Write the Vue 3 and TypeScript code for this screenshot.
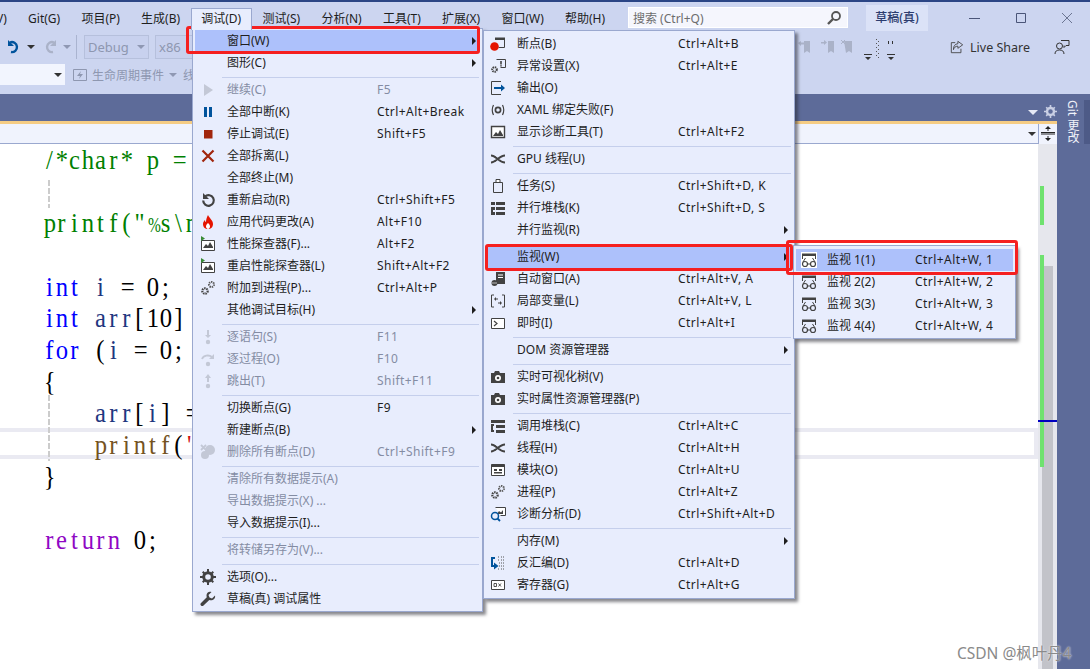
<script setup lang="ts">
interface Item { label?: string; key?: string; icon?: string; arrow?: boolean; off?: boolean; active?: boolean; sep?: boolean }
const s: Item = { sep: true }
const debugMenu: Item[] = [
  { label: '窗口(W)', arrow: true, active: true },
  { label: '图形(C)', arrow: true }, s,
  { label: '继续(C)', key: 'F5', icon: 'play', off: true },
  { label: '全部中断(K)', key: 'Ctrl+Alt+Break', icon: 'pause' },
  { label: '停止调试(E)', key: 'Shift+F5', icon: 'stop' },
  { label: '全部拆离(L)', icon: 'cross' },
  { label: '全部终止(M)' },
  { label: '重新启动(R)', key: 'Ctrl+Shift+F5', icon: 'restart' },
  { label: '应用代码更改(A)', key: 'Alt+F10', icon: 'flame' },
  { label: '性能探查器(F)...', key: 'Alt+F2', icon: 'perf' },
  { label: '重启性能探查器(L)', key: 'Shift+Alt+F2', icon: 'perf' },
  { label: '附加到进程(P)...', key: 'Ctrl+Alt+P', icon: 'gears' },
  { label: '其他调试目标(H)', arrow: true }, s,
  { label: '逐语句(S)', key: 'F11', icon: 'stepin', off: true },
  { label: '逐过程(O)', key: 'F10', icon: 'stepover', off: true },
  { label: '跳出(T)', key: 'Shift+F11', icon: 'stepout', off: true }, s,
  { label: '切换断点(G)', key: 'F9' },
  { label: '新建断点(B)', arrow: true },
  { label: '删除所有断点(D)', key: 'Ctrl+Shift+F9', icon: 'bpdel', off: true }, s,
  { label: '清除所有数据提示(A)', off: true },
  { label: '导出数据提示(X) ...', off: true },
  { label: '导入数据提示(I)...' }, s,
  { label: '将转储另存为(V)...', off: true }, s,
  { label: '选项(O)...', icon: 'gear' },
  { label: '草稿(真) 调试属性', icon: 'wrench' },
]
const windowMenu: Item[] = [
  { label: '断点(B)', key: 'Ctrl+Alt+B', icon: 'bp' },
  { label: '异常设置(X)', key: 'Ctrl+Alt+E', icon: 'exc' },
  { label: '输出(O)', icon: 'output' },
  { label: 'XAML 绑定失败(F)', icon: 'xaml' },
  { label: '显示诊断工具(T)', key: 'Ctrl+Alt+F2', icon: 'diag' }, s,
  { label: 'GPU 线程(U)', icon: 'threads' }, s,
  { label: '任务(S)', key: 'Ctrl+Shift+D, K', icon: 'task' },
  { label: '并行堆栈(K)', key: 'Ctrl+Shift+D, S', icon: 'stacks' },
  { label: '并行监视(R)', arrow: true }, s,
  { label: '监视(W)', arrow: true, active: true },
  { label: '自动窗口(A)', key: 'Ctrl+Alt+V, A', icon: 'auto' },
  { label: '局部变量(L)', key: 'Ctrl+Alt+V, L', icon: 'locals' },
  { label: '即时(I)', key: 'Ctrl+Alt+I', icon: 'imm' }, s,
  { label: 'DOM 资源管理器', arrow: true }, s,
  { label: '实时可视化树(V)', icon: 'camera' },
  { label: '实时属性资源管理器(P)', icon: 'camera' }, s,
  { label: '调用堆栈(C)', key: 'Ctrl+Alt+C', icon: 'call' },
  { label: '线程(H)', key: 'Ctrl+Alt+H', icon: 'threads' },
  { label: '模块(O)', key: 'Ctrl+Alt+U', icon: 'module' },
  { label: '进程(P)', key: 'Ctrl+Alt+Z', icon: 'gears' },
  { label: '诊断分析(D)', key: 'Ctrl+Shift+Alt+D', icon: 'analyze' }, s,
  { label: '内存(M)', arrow: true },
  { label: '反汇编(D)', key: 'Ctrl+Alt+D', icon: 'disasm' },
  { label: '寄存器(G)', key: 'Ctrl+Alt+G', icon: 'reg' },
]
const watchMenu: Item[] = [
  { label: '监视 1(1)', key: 'Ctrl+Alt+W, 1', icon: 'watch', active: true },
  { label: '监视 2(2)', key: 'Ctrl+Alt+W, 2', icon: 'watch' },
  { label: '监视 3(3)', key: 'Ctrl+Alt+W, 3', icon: 'watch' },
  { label: '监视 4(4)', key: 'Ctrl+Alt+W, 4', icon: 'watch' },
]
const menus = [
  { id: 'm1', items: debugMenu },
  { id: 'm2', items: windowMenu },
  { id: 'm3', items: watchMenu },
]
const menubar = ['Git(G)', '项目(P)', '生成(B)', '调试(D)', '测试(S)', '分析(N)', '工具(T)', '扩展(X)', '窗口(W)', '帮助(H)']

type Tok = [string, string]
const lines: Tok[][] = [
  [['c', '/*char* p =']],
  [],
  [['c', 'printf("%s\\n']],
  [],
  [['k', 'int'], ['p', ' '], ['v', 'i'], ['p', ' = 0;']],
  [['k', 'int'], ['p', ' '], ['v', 'arr'], ['p', '[10]']],
  [['k', 'for'], ['p', ' ('], ['v', 'i'], ['p', ' = 0;']],
  [['p', '{']],
  [['p', '    '], ['v', 'arr'], ['p', '['], ['v', 'i'], ['p', '] =']],
  [['p', '    '], ['f', 'printf'], ['p', '('], ['s', '"']],
  [['p', '}']],
  [],
  [['r', 'return'], ['p', ' 0;']],
]
</script>

<template>
  <div class="ide">
    <svg class="defs" width="0" height="0" aria-hidden="true">
      <defs>
        <symbol id="play" viewBox="0 0 16 16"><path d="M4 2l9 6-9 6z" fill="#c3c8d6"/></symbol>
        <symbol id="pause" viewBox="0 0 16 16"><path d="M4 3h3v10H4zM9 3h3v10H9z" fill="#00539c"/></symbol>
        <symbol id="stop" viewBox="0 0 16 16"><path d="M4 4h8.500v8.500H4z" fill="#a1260d"/></symbol>
        <symbol id="cross" viewBox="0 0 16 16"><path d="M2.500 2.500l11 11M13.500 2.500l-11 11" stroke="#a1260d" stroke-width="2.200" fill="none"/></symbol>
        <symbol id="restart" viewBox="0 0 16 16"><path d="M5 4.500a5.300 5.300 0 1 1-1.800 4" stroke="#424242" stroke-width="2.200" fill="none"/><path d="M3 1v6h6z" fill="#424242"/></symbol>
        <symbol id="flame" viewBox="0 0 16 16"><path d="M8 1c1 3 5 5 5 9 0 3-2 5-5 5s-5-2-5-5c0-2 1-3 2-4 0 2 1 2 1 2 0-3 1-5 2-7z" fill="#e51400"/><path d="M8 9c1 1 2 2 2 3.500S9 15 8 15s-2-1-2-2.500S7 10 8 9z" fill="#fff"/></symbol>
        <symbol id="perf" viewBox="0 0 16 16"><path d="M1.500 4.500h13v10h-13z" fill="#fff" stroke="#424242"/><path d="M3 12l3-4 2 2 2-4 3 5v1H3z" fill="#424242"/><path d="M1 0l4 2.500L1 5z" fill="#388a34"/></symbol>
        <symbol id="gears" viewBox="0 0 16 16"><circle cx="5" cy="11" r="2.700" fill="none" stroke="#424242" stroke-width="2.200" stroke-dasharray="1.500 .8"/><circle cx="11.500" cy="4.500" r="2.500" fill="none" stroke="#5a5a5a" stroke-width="2" stroke-dasharray="1.400 .8"/></symbol>
        <symbol id="stepin" viewBox="0 0 16 16"><path d="M7 1h2v5h2l-3 3-3-3h2z" fill="#c3c8d6"/><circle cx="8" cy="13" r="2.200" fill="#c3c8d6"/></symbol>
        <symbol id="stepover" viewBox="0 0 16 16"><path d="M2 8a6 5 0 0 1 10-2" fill="none" stroke="#c3c8d6" stroke-width="1.800"/><path d="M14 3v5H9z" fill="#c3c8d6"/><circle cx="8" cy="13" r="2.200" fill="#c3c8d6"/></symbol>
        <symbol id="stepout" viewBox="0 0 16 16"><path d="M7 9h2V5h2L8 1 5 5h2z" fill="#c3c8d6"/><circle cx="8" cy="13" r="2.200" fill="#c3c8d6"/></symbol>
        <symbol id="bpdel" viewBox="0 0 16 16"><circle cx="10" cy="6" r="5" fill="#c3c8d6"/><circle cx="5" cy="11" r="4" fill="#c3c8d6"/><path d="M1 1l5 5M6 1L1 6" stroke="#c3c8d6" stroke-width="1.800"/></symbol>
        <symbol id="gear" viewBox="0 0 16 16"><circle cx="8" cy="8" r="4.300" fill="none" stroke="#424242" stroke-width="3"/><path d="M7 0h2v3H7zM7 13h2v3H7zM0 7h3v2H0zM13 7h3v2h-3zM2 3.400L3.400 2l2 2L4 5.400zM10.600 12l1.400-1.400 2 2-1.400 1.400zM2 12.600l2-2L5.400 12l-2 2zM10.600 4l2-2L14 3.400l-2 2z" fill="#424242"/></symbol>
        <symbol id="wrench" viewBox="0 0 16 16"><path d="M15 4.500l-3 3-2.500-1-1-2.500 3-3C9 0 6.500 1.500 6.500 4.500c0 .8.200 1.300.3 1.700L1 12c-1 1-.5 2 0 2.500s1.600 1 2.500 0L9.300 9c2.700 1.200 6.600-.8 5.700-4.500z" fill="#424242"/></symbol>
        <symbol id="bp" viewBox="0 0 16 16"><path d="M5.500 2.500h9v9h-6" fill="none" stroke="#424242"/><path d="M5 1.500h10V4H5z" fill="#424242"/><circle cx="4.500" cy="10.500" r="4.300" fill="#e51400"/></symbol>
        <symbol id="exc" viewBox="0 0 16 16"><path d="M6.500 1.500h9v8h-5" fill="none" stroke="#424242"/><path d="M10.200 3h1.600v3.500h-1.600zM10.200 7.200h1.600v1.300h-1.600z" fill="#424242"/><circle cx="4.500" cy="11.500" r="2.300" fill="none" stroke="#424242" stroke-width="2" stroke-dasharray="1.300 .7"/></symbol>
        <symbol id="output" viewBox="0 0 16 16"><path d="M11 1.500H1.500v13H11" fill="none" stroke="#424242"/><path d="M4 7h7V4.500L15 8l-4 3.500V9H4z" fill="#00539c"/></symbol>
        <symbol id="xaml" viewBox="0 0 16 16"><path d="M3.500 3Q1 8 3.500 13M12.500 3Q15 8 12.500 13" fill="none" stroke="#424242" stroke-width="1.200"/><circle cx="8" cy="8" r="2.600" fill="none" stroke="#424242" stroke-width="1.700"/></symbol>
        <symbol id="diag" viewBox="0 0 16 16"><path d="M1.500 2.500h13v11h-13z" fill="#fff" stroke="#424242" stroke-width="1.400"/><path d="M3 12l3-4 2 2 2-4 3 5v1H3z" fill="#424242"/></symbol>
        <symbol id="threads" viewBox="0 0 16 16"><path d="M1 4.500c5 0 8 7 14 7M1 11.500c5 0 8-7 14-7" fill="none" stroke="#424242" stroke-width="2"/><path d="M5 5.500l3 2.500 3-2.500M5 10.500L8 8l3 2.500" fill="none" stroke="#424242"/></symbol>
        <symbol id="task" viewBox="0 0 16 16"><path d="M3.500 4.500h9v10h-9z" fill="none" stroke="#424242"/><path d="M6 1.500h4v3H6z" fill="#fff" stroke="#424242"/></symbol>
        <symbol id="stacks" viewBox="0 0 16 16"><path d="M1 2h4v3H1zM6 2h9v3H6zM6 7h9v3H6zM6 12h9v3H6zM1 7h4v3H3v2h2v3H1z" fill="#424242"/></symbol>
        <symbol id="auto" viewBox="0 0 16 16"><path d="M6 1h9v12H6z" fill="#424242"/><path d="M8 3.500h5v1H8zM8 6h5v1H8z" fill="#fff"/><circle cx="4.500" cy="12" r="3" fill="#424242"/><path d="M2 12h5" stroke="#bbb"/></symbol>
        <symbol id="locals" viewBox="0 0 16 16"><path d="M4 2H1.500v12H4M12 2h2.500v12H12" fill="none" stroke="#424242"/><path d="M4 6l2-2v1.500h2v1H6V8zM12 10l-2 2v-1.500H8v-1h2V8z" fill="#424242"/></symbol>
        <symbol id="imm" viewBox="0 0 16 16"><path d="M1.500 3.500h13v10h-13z" fill="#fff" stroke="#424242"/><path d="M4 6l3 2.500L4 11" fill="none" stroke="#424242" stroke-width="1.200"/></symbol>
        <symbol id="camera" viewBox="0 0 16 16"><path d="M1 4h3l1-2h4l1 2h5v10H1z" fill="#424242"/><circle cx="8" cy="9" r="3" fill="#fff"/><circle cx="8" cy="9" r="1.300" fill="#424242"/></symbol>
        <symbol id="call" viewBox="0 0 16 16"><path d="M1 2h14v3H1zM6 7h9v3H6zM6 12h9v3H6zM1 6h3v2H3v4h1v2H1z" fill="#424242"/></symbol>
        <symbol id="module" viewBox="0 0 16 16"><path d="M1.500 2.500h13v11h-13z" fill="#fff" stroke="#424242"/><path d="M1.500 2.500h13v2.500h-13zM4 7h3v2H4zM9 7h3v2H9zM4 10h8v1.500H4z" fill="#424242"/></symbol>
        <symbol id="analyze" viewBox="0 0 16 16"><path d="M5.500 1.500h10v8h-5" fill="#fff" stroke="#424242"/><path d="M7 8l2-3 2 1.500L13 4v4z" fill="#424242"/><circle cx="5" cy="10" r="3.500" fill="none" stroke="#00539c" stroke-width="1.500"/><path d="M7.500 12.500L10 15" stroke="#00539c" stroke-width="1.800"/></symbol>
        <symbol id="disasm" viewBox="0 0 16 16"><path d="M8 2h2M11 2h4M8 5h1M11 5h3M9 8h6M9 11h6M8 14h2M11 14h4" stroke="#555" stroke-dasharray="1 1" fill="none"/><path d="M1 2h4v2H3v6h1V7.500L8.500 11 4 14.500V12H1z" fill="#00539c"/></symbol>
        <symbol id="reg" viewBox="0 0 16 16"><path d="M1.500 3.500h13v9h-13z" fill="#fff" stroke="#424242"/><path d="M4 6.500h2.500v3H4zM8.500 6.500l2.500 3M11 6.500l-2.500 3" fill="none" stroke="#424242" stroke-width=".9"/></symbol>
        <symbol id="watch" viewBox="0 0 16 16"><path d="M1 1.500h14V4H1z" fill="#424242"/><path d="M1.500 4v3M14.500 4v3" stroke="#424242"/><circle cx="4" cy="12" r="2.500" fill="none" stroke="#424242" stroke-width="1.200"/><circle cx="12" cy="12" r="2.500" fill="none" stroke="#424242" stroke-width="1.200"/><path d="M6.500 12h3M2 10l2.500-4M14 10l-2.500-4" fill="none" stroke="#424242"/></symbol>
      </defs>
    </svg>

    <header class="chrome">
      <div class="titlebar">
        <nav class="menubar">
          <span class="mi clip">V)</span>
          <span v-for="m in menubar" :key="m" class="mi" :class="{ open: m === '调试(D)' }">{{ m }}</span>
        </nav>
        <div class="search">
          <span>搜索 (Ctrl+Q)</span>
          <svg width="16" height="16" viewBox="0 0 16 16"><circle cx="10" cy="6" r="4" fill="none" stroke="#555" stroke-width="1.800"/><path d="M7 9l-5 5" stroke="#555" stroke-width="2.400"/></svg>
        </div>
        <div class="project">草稿(真)</div>
        <div class="winctl">
          <svg width="12" height="12" viewBox="0 0 12 12"><path d="M0 6.500h11" stroke="#4a5578"/></svg>
          <svg width="12" height="12" viewBox="0 0 12 12"><path d="M1.500 1.500h9v9h-9z" fill="none" stroke="#4a5578"/></svg>
          <svg width="12" height="12" viewBox="0 0 12 12"><path d="M1 1l10 10M11 1L1 11" stroke="#6b7592"/></svg>
        </div>
      </div>

      <div class="toolrow one">
        <svg class="undo" width="16" height="16" viewBox="0 0 16 16"><path d="M4 3.500a5 5 0 1 1 1 9.500" fill="none" stroke="#00539c" stroke-width="2.400"/><path d="M2 1v6h6z" fill="#00539c"/></svg>
        <i class="tri"></i>
        <svg class="redo" width="16" height="16" viewBox="0 0 16 16"><path d="M12 3.500a5 5 0 1 0-1 9.500" fill="none" stroke="#aab2c8" stroke-width="2.400"/><path d="M14 1v6H8z" fill="#aab2c8"/></svg>
        <i class="tri dim"></i>
        <i class="tsep"></i>
        <div class="combo debug">Debug<i class="tri dim"></i></div>
        <div class="combo x86">x86</div>
        <div class="spring"></div>
        <svg class="marks" width="62" height="18" viewBox="0 0 62 18" fill="#aab2c8"><path d="M7 3h6v12l-3-2-3 2zM1 5l3-2v1.500h3v2H4V8zM24 4h3V2l3 2.500L27 7V5.500h-3zM31 3h6v12l-3-2-3 2zM47 3h8v12l-3-2-3 2zM44 2l4 4M48 2l-4 4"/><path d="M44 2l4 4M48 2l-4 4" stroke="#aab2c8"/></svg>
        <svg class="flows" width="36" height="24" viewBox="0 0 36 24"><path d="M2 16h8v1H2zM3 19h6l-3 3z" fill="#333"/><path d="M14 1h1v1h-1zM16 3h1v1h-1zM14 5h1v1h-1zM16 7h1v1h-1zM14 9h1v1h-1zM16 11h1v1h-1zM14 13h1v1h-1zM16 15h1v1h-1zM14 17h1v1h-1zM16 19h1v1h-1z" fill="#555"/><path d="M26 3h1v3h-1zM30 3h1v3h-1zM25 16h8v1h-8zM26 19h6l-3 3z" fill="#333"/></svg>
        <div class="live">
          <svg width="14" height="14" viewBox="0 0 16 16"><path d="M6 3H1.500v11.500h11V10" fill="none" stroke="#424242"/><path d="M9 1.500l5.500 4-5.500 4V7C6 7 4.500 9 4 11c-.500-4 2-6.500 5-6.800z" fill="none" stroke="#424242"/></svg>
          <span>Live Share</span>
        </div>
        <svg class="feedback" width="16" height="16" viewBox="0 0 16 16"><circle cx="5.500" cy="7" r="3" fill="none" stroke="#333"/><path d="M1 15c0-3 2-4 4.500-4s4.500 1 4.500 4" fill="none" stroke="#333"/><path d="M7 1.500h8v5h-3l-2 2v-2" fill="none" stroke="#333"/></svg>
      </div>

      <div class="toolrow two">
        <div class="scopebox"><i class="tri"></i></div>
        <svg class="bolt" width="14" height="14" viewBox="0 0 14 14"><path d="M.5 1.500h13v11H.5z" fill="none" stroke="#8e97b0"/><path d="M8 3L4 8h3l-1 3 4-5H7z" fill="#8e97b0"/></svg>
        <span class="life">生命周期事件</span>
        <i class="tri dim"></i>
        <span class="life thread">线</span>
      </div>
    </header>

    <div class="workspace">
      <div class="docwell">
        <div class="tabband">
          <i class="tri pale"></i>
          <svg class="tabgear" width="13" height="13" viewBox="0 0 16 16"><circle cx="8" cy="8" r="4.300" fill="none" stroke="#c9cfe4" stroke-width="3"/><path d="M7 0h2v3H7zM7 13h2v3H7zM0 7h3v2H0zM13 7h3v2h-3zM2 3.400L3.400 2l2 2L4 5.400zM10.600 12l1.400-1.400 2 2-1.400 1.400zM2 12.600l2-2L5.400 12l-2 2zM10.600 4l2-2L14 3.400l-2 2z" fill="#c9cfe4"/></svg>
        </div>
        <div class="navbar">
          <i class="tri"></i>
          <div class="splitter">
            <svg width="16" height="18" viewBox="0 0 16 18"><path d="M1 9h14M1 7.500h14" stroke="#222" fill="none"/><path d="M8 1l-3 3h6zM8 16l-3-3h6z" fill="#222"/><path d="M7.500 3h1v3h-1zM7.500 11h1v3h-1z" fill="#222"/></svg>
          </div>
        </div>
        <div class="editorrow">
          <div class="editor">
            <div v-for="(line, n) in lines" :key="n" class="codeline" :class="{ current: n === 9 }">
              <span v-for="(tok, t) in line" :key="t" :class="tok[0]"><span v-for="(ch, c) in tok[1].split('')" :key="c" class="cell" :class="{ wide: ch === '%' }">{{ ch }}</span></span>
            </div>
            <i class="guide g1"></i>
            <i class="guide g2"></i>
          </div>
          <div class="scroll">
            <i class="thumb"></i>
            <i class="chg c1"></i>
            <i class="chg c2"></i>
            <i class="caret"></i>
          </div>
        </div>
      </div>
      <aside class="sidepanel">
        <div class="gittab"><span class="gitlabel">Git 更改</span><i class="gitstrip"></i></div>
      </aside>
    </div>

    <div v-for="menu in menus" :key="menu.id" class="menu" :class="menu.id">
      <template v-for="(it, i) in menu.items" :key="i">
        <div v-if="it.sep" class="sep"></div>
        <div v-else class="row" :class="{ off: it.off, active: it.active }">
          <span class="ico"><svg v-if="it.icon" width="16" height="16"><use :href="'#' + it.icon"/></svg></span>
          <span class="label">{{ it.label }}</span>
          <span class="key">{{ it.key }}</span>
          <i v-if="it.arrow" class="more"></i>
        </div>
      </template>
    </div>

    <i class="mark r1"></i>
    <i class="mark r2"></i>
    <i class="mark r3"></i>
    <div class="watermark">CSDN @枫叶丹4</div>
  </div>
</template>

<style scoped>
.ide {
  position: relative;
  width: 1090px;
  height: 669px;
  overflow: hidden;
  display: flex;
  flex-direction: column;
  background: #fff;
  font-family: "Noto Sans", "Noto Sans CJK SC", sans-serif;
  font-size: 12px;
  color: #1e1e1e;
}
.defs { position: absolute; }
.chrome {
  height: 94px;
  flex: none;
  background: #ccd5f0;
  border-top: 2px solid #2b4585;
  box-sizing: border-box;
}
.titlebar { height: 30px; display: flex; align-items: flex-start; }
.menubar { display: flex; height: 28px; margin-left: -14.500px; padding-top: 6px; box-sizing: border-box; }
.mi {
  height: 22px;
  line-height: 19px;
  padding: 0 9.600px;
  border: 1px solid transparent;
  border-bottom: 0;
  box-sizing: border-box;
  white-space: nowrap;
}
.mi.open { background: #e8edfd; border-color: #9aa8cf; position: relative; z-index: 6; }
.search {
  position: absolute;
  left: 628px;
  top: 7px;
  width: 220px;
  height: 21px;
  box-sizing: border-box;
  background: #f5f6fd;
  border: 1px solid #fff;
  display: flex;
  align-items: center;
  justify-content: space-between;
  padding: 0 5px 0 4px;
  color: #6d6d6d;
}
.project {
  position: absolute;
  left: 866px;
  top: 5px;
  width: 62px;
  height: 26px;
  background: #dbe2f7;
  color: #2c3c6e;
  text-align: center;
  line-height: 25px;
  font-weight: 500;
}
.winctl { position: absolute; left: 969px; top: 12px; display: flex; gap: 34px; }
.toolrow { display: flex; align-items: center; }
.one { height: 30px; position: relative; }
.two { height: 32px; }
.tri {
  display: inline-block;
  width: 0;
  height: 0;
  border-left: 4px solid transparent;
  border-right: 4px solid transparent;
  border-top: 4px solid #333;
}
.tri.dim { border-top-color: #8f98b3; }
.tri.pale { border-top-color: #e6e9f5; border-left-width: 5px; border-right-width: 5px; border-top-width: 5px; }
.undo { margin-left: 6px; }
.one > .tri { margin-left: 5px; }
.redo { margin-left: 7px; }
.tsep { width: 1px; height: 24px; background: #aab4d0; margin-left: 5px; }
.combo {
  height: 24px;
  box-sizing: border-box;
  border: 1px solid #b6c0dc;
  background: #c8d1ee;
  color: #8e97b0;
  font-size: 13px;
  line-height: 22px;
  padding-left: 3px;
  display: flex;
  align-items: center;
  justify-content: space-between;
  padding-right: 3px;
}
.debug { width: 65px; margin-left: 7px; }
.x86 { width: 40px; margin-left: 6px; }
.spring { flex: 1; }
.marks { margin-right: 3px; flex: none; }
.flows { margin-right: 52px; margin-top: 6px; flex: none; }
.live { display: flex; flex: none; align-items: center; gap: 6px; font-size: 12.500px; color: #333; margin-right: 24px; white-space: nowrap; }
.live svg { flex: none; }
.feedback { margin-right: 20px; flex: none; }
.scopebox {
  width: 65px;
  height: 21px;
  margin-top: -7px;
  background: #f2f5fe;
  display: flex;
  align-items: center;
  justify-content: flex-end;
  padding-right: 3px;
  box-sizing: border-box;
}
.bolt { margin: -7px 5px 0 8px; }
.life { color: #8e97b0; margin-top: -7px; }
.two > .tri { margin: -7px 0 0 5px; }
.thread { margin-left: 6px; }
.workspace { flex: 1; display: flex; min-height: 0; }
.docwell { width: 1057px; display: flex; flex-direction: column; }
.tabband {
  height: 27px;
  background: #5d6b99;
  display: flex;
  align-items: flex-end;
  justify-content: flex-end;
  gap: 6px;
  padding: 0 0 3px;
  box-sizing: border-box;
}
.tabband .tri { margin-bottom: 3px; }
.navbar {
  height: 23px;
  border-top: 3px solid #f5cc84;
  border-bottom: 1px solid #9aa8cf;
  background: #f0f3fd;
  box-sizing: border-box;
  display: flex;
  align-items: center;
  justify-content: flex-end;
}
.navbar > .tri { margin-right: 2px; }
.splitter {
  width: 19px;
  height: 20px;
  border-left: 1px solid #9aa8cf;
  background: #f0f3fd;
  box-sizing: border-box;
  display: flex;
  align-items: center;
  justify-content: center;
}
.editorrow { flex: 1; display: flex; min-height: 0; }
.editor { flex: 1; position: relative; background: #fff; padding-top: 0; }
.codeline {
  height: 31.670px;
  line-height: 31px;
  padding-left: 42.500px;
  white-space: pre;
  font-family: "Liberation Serif", serif;
  font-size: 28px;
}
.cell { display: inline-block; width: 12.950px; text-align: center; transform: scaleX(.88); }
.cell.wide { font-size: 22px; transform: scaleX(.7); }
.current { position: relative; z-index: 0; }
.current::before {
  content: "";
  position: absolute;
  z-index: -1;
  left: 0;
  right: 0;
  top: -1px;
  height: 31px;
  box-sizing: border-box;
  border: 4px solid #eaeaf2;
  border-left-width: 0;
}
.c { color: #008000; }
.k { color: #0000ff; }
.v { color: #1f377f; }
.p { color: #000; }
.f { color: #74531f; }
.s { color: #d01010; }
.r { color: #8f08c4; }
.guide { position: absolute; left: 48px; width: 2px; background: repeating-linear-gradient(#ccc 0 6px, transparent 6px 8px); }
.g1 { top: 36px; height: 28px; }
.g2 { top: 251px; height: 66px; }
.scroll { width: 19px; flex: none; position: relative; background: #e6e7ed; }
.thumb { position: absolute; left: 4px; width: 11px; top: 122px; bottom: 0; background: #c2c3c9; }
.chg { position: absolute; left: 2px; width: 4px; background: #6fe26f; }
.c1 { top: 42px; height: 39px; }
.c2 { top: 111px; height: 212px; }
.caret { position: absolute; left: 0; right: 0; top: 276px; height: 2px; background: #0000c0; }
.sidepanel { width: 33px; flex: none; background: #5d6b99; }
.gittab { position: relative; height: 50px; }
.gitlabel {
  position: absolute;
  left: 7px;
  top: 6px;
  writing-mode: vertical-rl;
  color: #f0f2fa;
  white-space: nowrap;
}
.gitstrip { position: absolute; right: 0; top: 6px; width: 6px; height: 44px; background: #4d5a87; }

.menu {
  position: absolute;
  box-sizing: border-box;
  background: #e8edfd;
  border: 1px solid #9aa8cf;
  box-shadow: 3px 3px 3px rgba(40, 40, 50, 0.55);
}
.m1 { left: 192px; top: 28px; width: 291px; height: 584px; padding-top: 1px; z-index: 2; }
.m2 { left: 483px; top: 30px; width: 312px; height: 569px; padding-top: 2px; z-index: 3; }
.m3 { left: 793px; top: 245px; width: 223px; height: 94px; padding-top: 3px; z-index: 4; }
.row { height: 22px; display: flex; align-items: center; position: relative; margin: 0 2px; white-space: nowrap; }
.row.active { background: #adc1fb; }
.row.off { color: #848ca3; }
.ico { flex: none; display: flex; justify-content: center; align-items: center; }
.label, .key { position: relative; top: -1px; }
.key { letter-spacing: .450px; }
.label { flex: none; }
.m1 .ico { width: 25px; }
.m1 .label { width: 150px; margin-left: 7px; }
.m2 .ico { width: 24px; }
.m2 .label { width: 161px; margin-left: 7px; }
.m3 .ico { width: 26px; }
.m3 .label { width: 88px; margin-left: 5px; }
.row.active .ico svg { background: #fff; }
.more {
  position: absolute;
  right: 4px;
  top: 7px;
  width: 0;
  height: 0;
  border-top: 4px solid transparent;
  border-bottom: 4px solid transparent;
  border-left: 4px solid #1e1e1e;
}
.sep { box-sizing: border-box; border-bottom: 1px solid #c5cfec; margin: -1px 3px 1px 29px; height: 5px; }
.mark {
  position: absolute;
  z-index: 5;
  box-sizing: border-box;
  border: 3px solid #f52020;
  border-radius: 3px;
}
.r1 { left: 186px; top: 26px; width: 294px; height: 28px; }
.r2 { left: 485px; top: 244px; width: 308px; height: 27px; }
.r3 { left: 786px; top: 240px; width: 232px; height: 35px; }
.watermark {
  position: absolute;
  left: 957px;
  top: 641px;
  z-index: 6;
  font-size: 15.500px;
  color: #8a8a8a;
  text-shadow: 0 0 2px #fff;
  white-space: nowrap;
}
</style>
